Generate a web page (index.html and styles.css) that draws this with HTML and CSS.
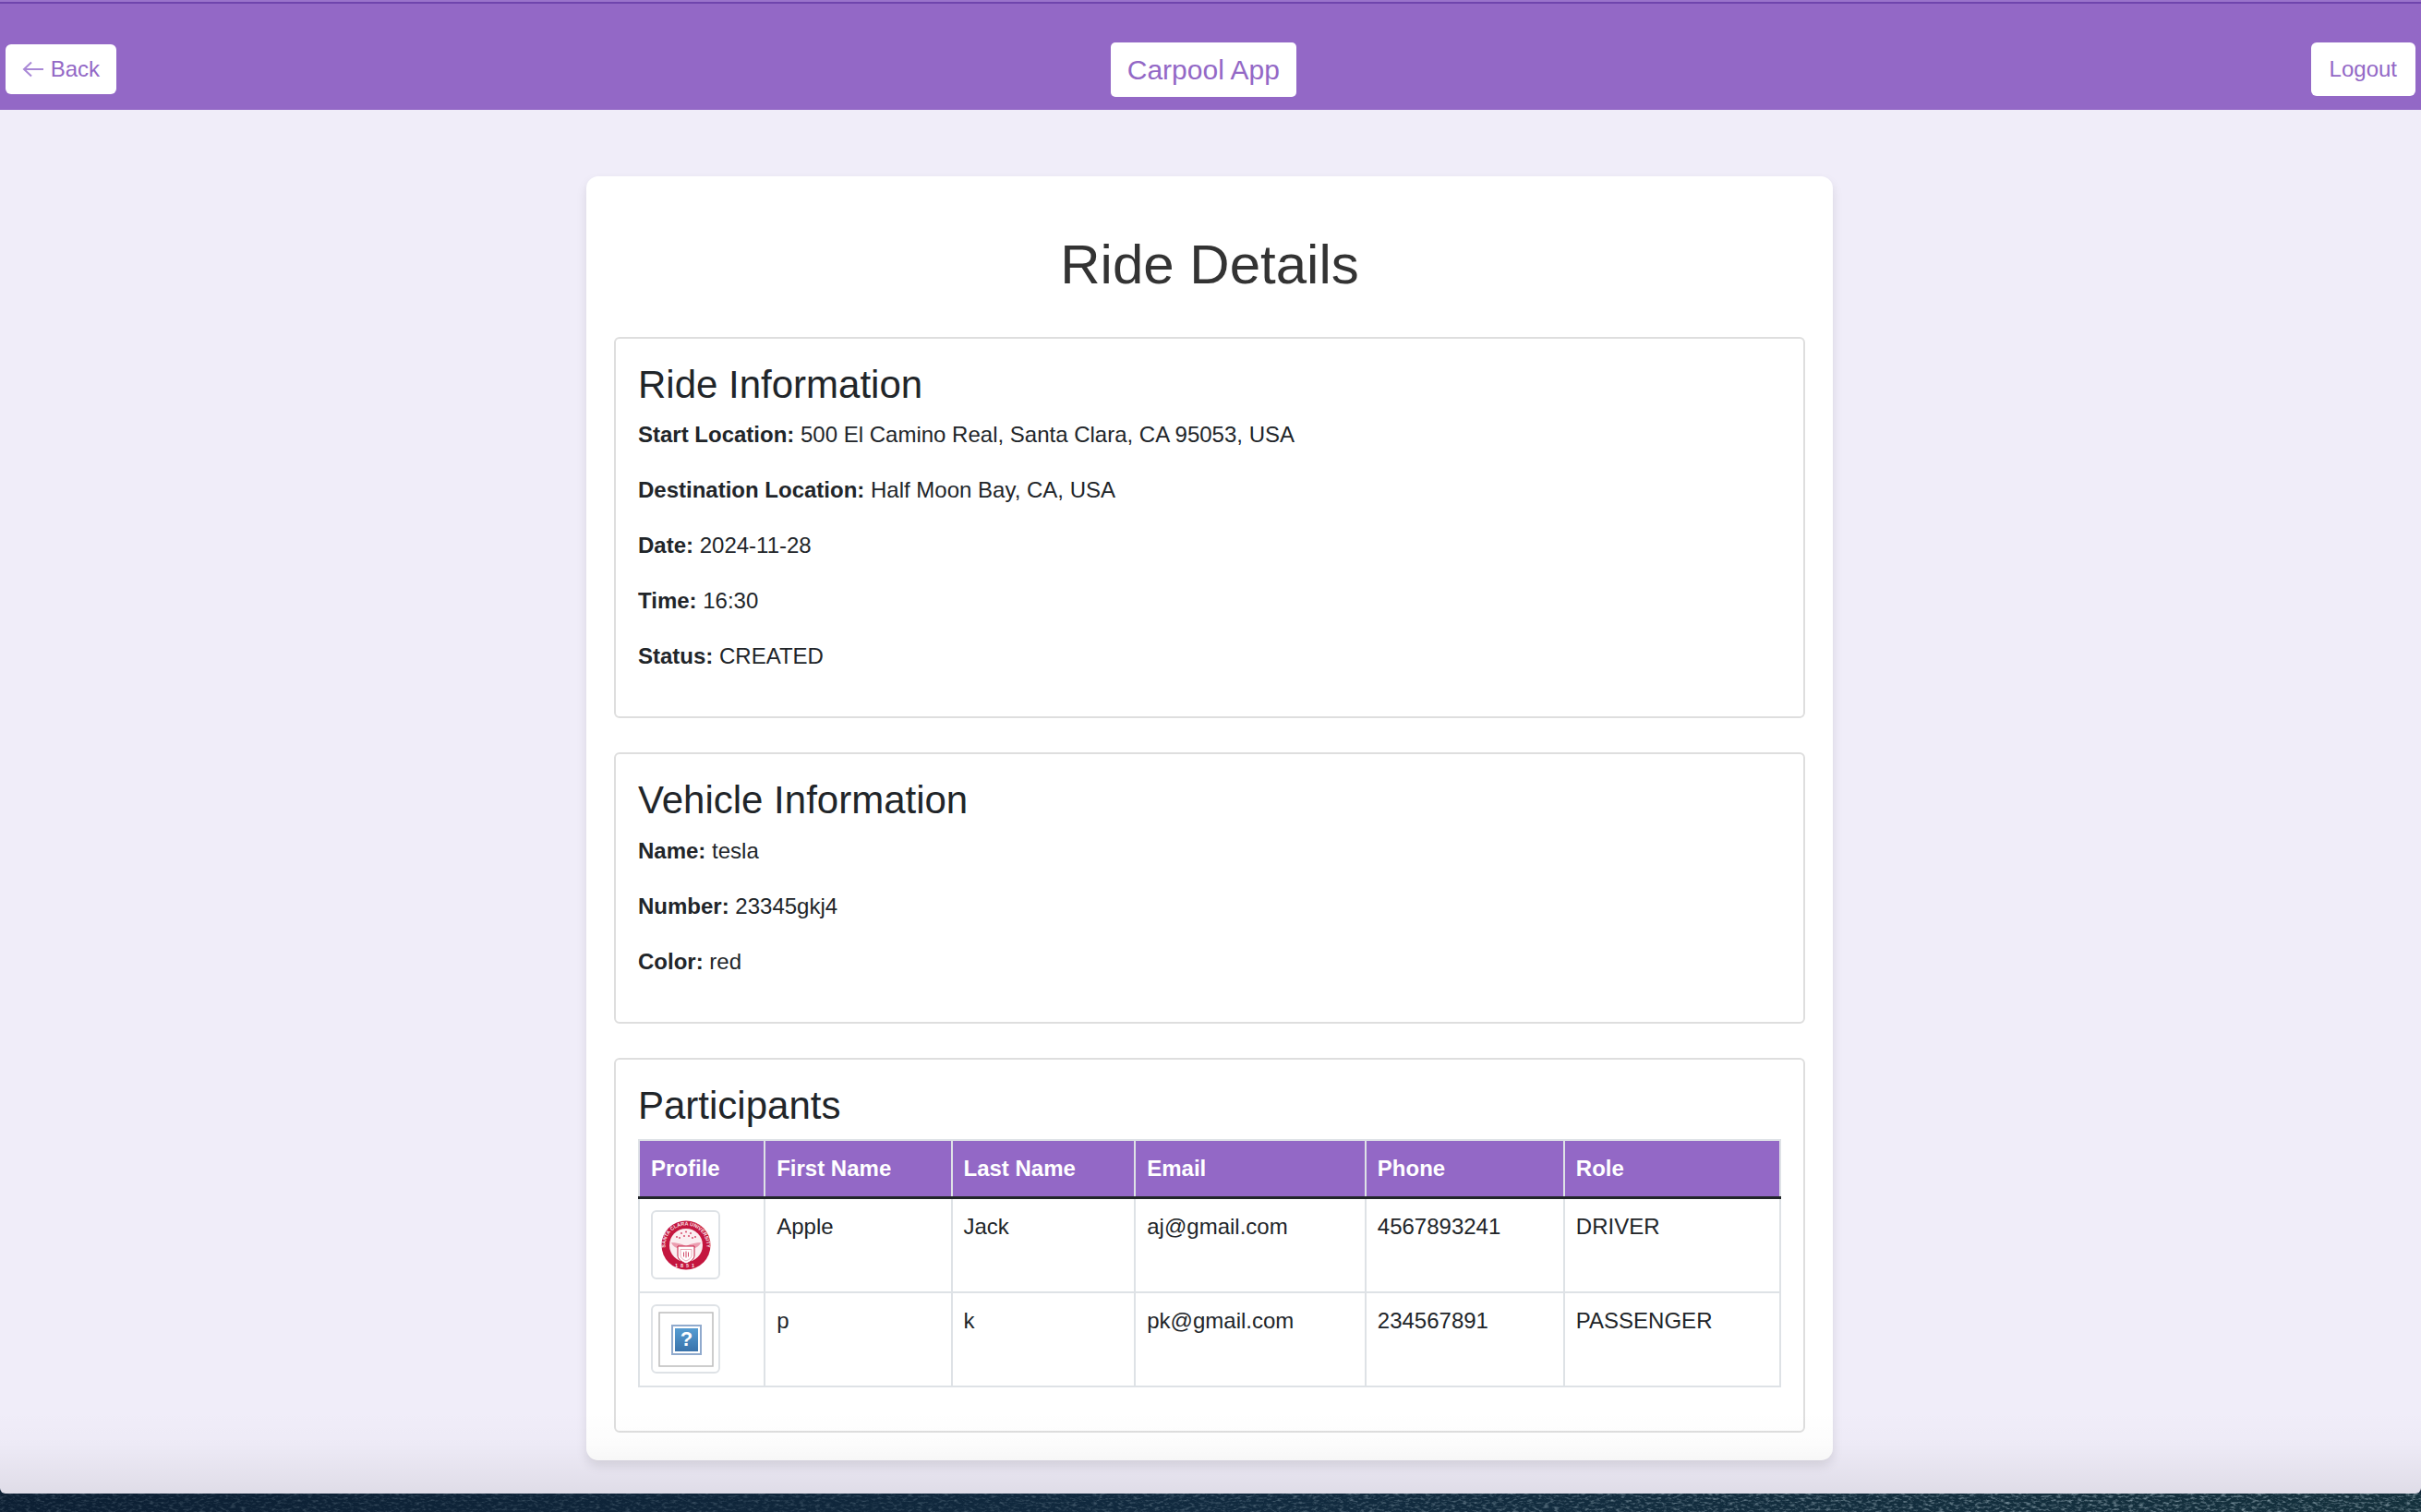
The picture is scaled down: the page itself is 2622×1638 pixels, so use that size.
FILE: index.html
```html
<!DOCTYPE html>
<html lang="en">
<head>
  <meta charset="UTF-8">
  <meta name="viewport" content="width=device-width, initial-scale=1.0">
  <title>Ride Details</title>
  <link rel="stylesheet" href="styles.css">
</head>
<body>
  <div class="window">
    <nav class="navbar">
      <a class="btn back-btn" href="#">
        <svg class="back-arrow" viewBox="0 0 24 24" width="24" height="24">
          <path d="M23 12H2M10 4.500 2 12l8 7.500" fill="none" stroke="#a988d6" stroke-width="2"/>
        </svg> Back</a>
      <a class="brand" href="#">Carpool App</a>
      <a class="btn logout-btn" href="#">Logout</a>
    </nav>

    <main class="card">
      <h1>Ride Details</h1>

      <section class="info-section">
        <h3>Ride Information</h3>
        <p><strong>Start Location:</strong> 500 El Camino Real, Santa Clara, CA 95053, USA</p>
        <p><strong>Destination Location:</strong> Half Moon Bay, CA, USA</p>
        <p><strong>Date:</strong> 2024-11-28</p>
        <p><strong>Time:</strong> 16:30</p>
        <p><strong>Status:</strong> CREATED</p>
      </section>

      <section class="info-section">
        <h3>Vehicle Information</h3>
        <p><strong>Name:</strong> tesla</p>
        <p><strong>Number:</strong> 23345gkj4</p>
        <p><strong>Color:</strong> red</p>
      </section>

      <section class="info-section">
        <h3>Participants</h3>
        <table class="people">
          <thead>
            <tr>
              <th>Profile</th>
              <th>First Name</th>
              <th>Last Name</th>
              <th>Email</th>
              <th>Phone</th>
              <th>Role</th>
            </tr>
          </thead>
          <tbody>
            <tr>
              <td>
                <div class="thumb">
                  <svg viewBox="0 0 60 60" width="60" height="60">
                    <defs>
                      <path id="sealTop" d="M7.500 31a22.500 22.500 0 0 1 45 0"/>
                    </defs>
                    <circle cx="30" cy="30" r="26.500" fill="#c4163f"/>
                    <circle cx="30" cy="30" r="18" fill="#fbeef1"/>
                    <text class="seal-text"><textPath href="#sealTop" startOffset="50%" text-anchor="middle">SANTA CLARA UNIVERSITY</textPath></text>
                    <text class="seal-text" x="30" y="53.500" text-anchor="middle" letter-spacing="3">1851</text>
                    <g fill="#d2395d">
                      <circle cx="20" cy="21" r=".9"/><circle cx="25" cy="17" r=".9"/><circle cx="30" cy="15.500" r=".9"/>
                      <circle cx="35" cy="17" r=".9"/><circle cx="40" cy="21" r=".9"/><circle cx="23" cy="22" r=".9"/>
                      <circle cx="28" cy="20" r=".9"/><circle cx="33" cy="20" r=".9"/><circle cx="37" cy="22" r=".9"/>
                    </g>
                    <path d="M14 27c5 0 10 1 16 4 6-3 11-4 16-4-1.500 4-5 6-10 7H24c-5-1-8.500-3-10-7z" fill="#eb9db0"/>
                    <path d="M21 31h18v10c0 4-4 7-9 9-5-2-9-5-9-9z" fill="#fff" stroke="#c4163f" stroke-width="1"/>
                    <path d="M24 34.500h12v6.500c0 2.500-2.500 4.500-6 6-3.500-1.500-6-3.500-6-6z" fill="none" stroke="#e08298" stroke-width=".7"/>
                    <path d="M30 36.500v7M27.500 37.500v5M32.500 37.500v5" stroke="#c4163f" stroke-width=".8"/>
                  </svg>
                </div>
              </td>
              <td>Apple</td>
              <td>Jack</td>
              <td>aj@gmail.com</td>
              <td>4567893241</td>
              <td>DRIVER</td>
            </tr>
            <tr>
              <td>
                <div class="thumb">
                  <svg viewBox="0 0 60 60" width="60" height="60">
                    <defs>
                      <linearGradient id="missingBlue" x1="0" y1="0" x2="0" y2="1">
                        <stop offset="0" stop-color="#559cd2"/>
                        <stop offset="1" stop-color="#3a73ab"/>
                      </linearGradient>
                    </defs>
                    <rect x="1" y="1" width="58" height="58" fill="#fff" stroke="#bdbdbd" stroke-width="1.500"/>
                    <rect x="15" y="15" width="31" height="31" fill="#fff" stroke="#90aacd" stroke-width="2"/>
                    <rect x="18" y="18" width="25" height="25" fill="url(#missingBlue)"/>
                    <text class="missing-mark" x="30.500" y="37" text-anchor="middle">?</text>
                  </svg>
                </div>
              </td>
              <td>p</td>
              <td>k</td>
              <td>pk@gmail.com</td>
              <td>234567891</td>
              <td>PASSENGER</td>
            </tr>
          </tbody>
        </table>
      </section>
    </main>
  </div>

  <svg class="desktop" width="2622" height="20" viewBox="0 0 2622 20" preserveAspectRatio="none">
    <defs>
      <linearGradient id="sea" x1="0" y1="0" x2="1" y2="0">
        <stop offset="0" stop-color="#0c1f33"/>
        <stop offset=".5" stop-color="#112a3f"/>
        <stop offset="1" stop-color="#14303c"/>
      </linearGradient>
      <linearGradient id="seaFade" x1="0" y1="0" x2="1" y2="0">
        <stop offset=".35" stop-color="#000"/>
        <stop offset=".85" stop-color="#fff"/>
      </linearGradient>
      <mask id="seaMask">
        <rect width="2622" height="20" fill="url(#seaFade)"/>
      </mask>
      <filter id="waves" x="0" y="0" width="100%" height="100%">
        <feTurbulence type="fractalNoise" baseFrequency="0.18 0.42" numOctaves="3" seed="7"/>
        <feColorMatrix type="matrix" values="0 0 0 0 .55  0 0 0 0 .68  0 0 0 0 .75  1.800 0 0 0 -.85"/>
      </filter>
    </defs>
    <rect width="2622" height="20" fill="url(#sea)"/>
    <rect width="2622" height="20" filter="url(#waves)" opacity=".3"/>
    <g mask="url(#seaMask)">
      <rect width="2622" height="20" filter="url(#waves)" opacity=".6"/>
    </g>
  </svg>
</body>
</html>
```

FILE: styles.css
```css
* {
  box-sizing: border-box;
}
body {
  margin: 0;
  height: 1638px;
  display: flex;
  flex-direction: column;
  overflow: hidden;
  font-family: "Liberation Sans", Arial, sans-serif;
  font-size: 24px;
  line-height: 1.5;
  color: #212529;
  background-color: #0e2236;
}
.window {
  position: relative;
  height: 1618px;
  background-color: #f0edf9;
  border-radius: 0 0 6px 6px;
  overflow: hidden;
}
/* soft shade along the bottom of the window */
.window::after {
  content: "";
  position: absolute;
  left: 0;
  right: 0;
  bottom: 0;
  height: 90px;
  background: linear-gradient(rgba(0, 0, 0, 0), rgba(0, 0, 0, 0.01) 40%, rgba(0, 0, 0, 0.07));
  pointer-events: none;
}
.desktop {
  display: block;
  flex: none;
}

.navbar {
  display: flex;
  justify-content: space-between;
  align-items: center;
  height: 119px;
  padding: 45px 6px 14px;
  background: linear-gradient(#9a74cb 2px, #6f45ad 2px, #6f45ad 4px, #9368c6 4px);
}
.navbar a {
  text-decoration: none;
  color: #9368c6;
  background-color: white;
}
.btn {
  padding: 9px 18px;
  border-radius: 6px;
}
.back-arrow {
  vertical-align: -4px;
}
.logout-btn {
  padding: 11px 20px;
}
.brand {
  margin-right: 22px;
  padding: 7px 18px;
  font-size: 30px;
  border-radius: 5px;
}

.card {
  width: 1350px;
  height: 1391px;
  margin: 72px 0 0 635px;
  padding: 30px;
  background-color: white;
  border-radius: 13px;
  box-shadow: 0 6px 12px rgba(0, 0, 0, 0.1);
}
.card h1 {
  margin: 30px 0 42px;
  font-size: 60px;
  font-weight: 500;
  line-height: 1.2;
  text-align: center;
  color: #333;
}
.info-section {
  margin-bottom: 37px;
  padding: 25px 24px 23px;
  border: 2px solid #dedede;
  border-radius: 6px;
}
.info-section:last-child {
  margin-bottom: 0;
}
.info-section h3 {
  margin: 0 0 11px;
  font-size: 42px;
  font-weight: 500;
  line-height: 1.2;
}
.info-section p {
  margin: 0 0 24px;
}

.people {
  width: 100%;
  margin-bottom: 24px;
  border-collapse: collapse;
}
.people th,
.people td {
  padding: 12px;
  text-align: left;
  vertical-align: top;
  border: 2px solid #dee2e6;
}
.people th {
  color: white;
  font-weight: 700;
  background-color: #9368c6;
  border-bottom: 3px solid #212529;
}
.thumb {
  width: 75px;
  height: 75px;
  margin-bottom: 1px;
  padding: 6px;
  background-color: white;
  border: 2px solid #dee2e6;
  border-radius: 6px;
}
.thumb svg {
  display: block;
}
.seal-text {
  font-size: 5.500px;
  font-weight: 700;
  fill: #fbe9ed;
}
.missing-mark {
  font-size: 22px;
  font-weight: 700;
  fill: white;
}
```
